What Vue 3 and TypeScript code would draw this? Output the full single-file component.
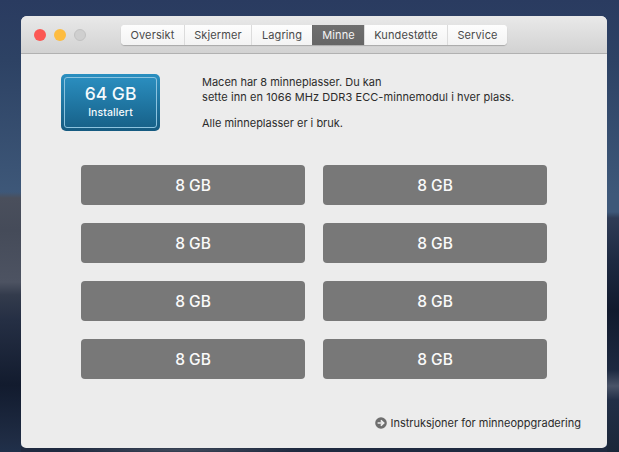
<script setup lang="ts">
const tabs = [
  { label: 'Oversikt', width: 63 },
  { label: 'Skjermer', width: 67 },
  { label: 'Lagring', width: 61 },
  { label: 'Minne', width: 52 },
  { label: 'Kundestøtte', width: 83 },
  { label: 'Service', width: 60 },
]
const activeTab = 'Minne'
const slots = Array.from({ length: 8 }, () => '8 GB')
</script>

<template>
  <div class="desktop">
    <section class="window">
      <header class="titlebar">
        <div class="lights">
          <span class="light red"></span>
          <span class="light yellow"></span>
          <span class="light gray"></span>
        </div>
        <nav class="tabs">
          <span
            v-for="tab in tabs"
            :key="tab.label"
            class="tab"
            :class="{ active: tab.label === activeTab }"
            :style="{ width: tab.width + 'px' }"
          >{{ tab.label }}</span>
        </nav>
      </header>
      <main class="content">
        <div class="summary">
          <div class="badge">
            <div class="badge-inner">
              <strong>64 GB</strong>
              <span>Installert</span>
            </div>
          </div>
          <div class="info">
            <p>Macen har 8 minneplasser. Du kan<br /><span class="wide">sette inn en 1066 MHz DDR3 ECC-minnemodul i hver plass.</span></p>
            <p>Alle minneplasser er i bruk.</p>
          </div>
        </div>
        <div class="slots">
          <div v-for="(slot, i) in slots" :key="i" class="slot">{{ slot }}</div>
        </div>
        <div class="footer">
          <svg class="arrow" width="12" height="12" viewBox="0 0 12 12">
            <circle cx="6" cy="6" r="5.8" fill="#6e6e6e" />
            <path d="M2.6 6H8M5.8 3.4 8.6 6 5.8 8.6" fill="none" stroke="#eee" stroke-width="1.7" />
          </svg>
          <span>Instruksjoner for minneoppgradering</span>
        </div>
      </main>
    </section>
  </div>
</template>

<style>
html, body { margin: 0; padding: 0; }
</style>

<style scoped>
.desktop {
  width: 619px;
  height: 452px;
  box-sizing: border-box;
  padding: 16px 12px 4px 21px;
  overflow: hidden;
  background:
    linear-gradient(180deg, rgba(74, 79, 92, 0) 192px, #4a4f5c 198px, #454b59 230px, #4d5362 282px, #333b4c 295px, #252f44 320px, #121b2e 385px, #1f2c44 440px, #20304a 452px) 0 0 / 21px 452px no-repeat,
    linear-gradient(180deg, rgba(47, 60, 86, 0) 212px, #2f3c56 218px, #1e2a42 260px, #111a2d 310px, #1d2940 370px, #4a5468 386px, #222f47 400px, #1b2739 452px) 100% 0 / 12px 452px no-repeat,
    radial-gradient(ellipse 120px 4px at 180px 450px, #414b5c 0%, rgba(65, 75, 92, 0) 100%) 0 0 / 619px 452px no-repeat,
    linear-gradient(180deg, #1f2a40, #1f2a40) 0 446px / 619px 6px no-repeat,
    linear-gradient(180deg, #2a3b60 0, #2d4264 60px, #3e5879 195px, #3e5879 452px);
  font-family: Inter, "Liberation Sans", sans-serif;
}
.window {
  width: 586px;
  height: 432px;
  display: flex;
  flex-direction: column;
  border-radius: 6px 6px 5px 5px;
  overflow: hidden;
  background: #ececec;
}
.titlebar {
  height: 37px;
  flex: none;
  display: flex;
  align-items: flex-start;
  background: linear-gradient(180deg, #e9e9e9 0%, #d2d2d2 100%);
  border-bottom: 1px solid #b1b1b1;
}
.lights {
  display: flex;
  gap: 8px;
  padding: 13px 0 0 13px;
  width: 87px;
  box-sizing: border-box;
}
.light {
  width: 12px;
  height: 12px;
  border-radius: 50%;
}
.red { background: #fc5753; }
.yellow { background: #fdbc40; }
.gray { background: #cfcfcf; border: 1px solid #c2c2c2; box-sizing: border-box; }
.tabs {
  display: flex;
  margin: 9px 0 0 13px;
  height: 20px;
  border-radius: 4px;
  background: #fff;
  box-shadow: 0 1px 1px rgba(0, 0, 0, 0.22);
  overflow: hidden;
}
.tab {
  display: flex;
  align-items: center;
  justify-content: center;
  box-sizing: border-box;
  font-size: 11px;
  letter-spacing: 0.12px;
  color: #4a4a4a;
  background: linear-gradient(180deg, #fdfdfd, #f3f3f3);
  border-left: 1px solid #dcdcdc;
}
.tab:first-child { border-left: 0; }
.tab.active {
  color: #f4f4f4;
  background: linear-gradient(180deg, #6f6f6f, #666);
  border-left-color: #696969;
}
.content {
  flex: 1;
  display: flex;
  flex-direction: column;
  padding: 20px 0 0 40px;
}
.summary {
  display: flex;
  gap: 42px;
  height: 91px;
}
.badge {
  width: 99px;
  height: 57px;
  box-sizing: border-box;
  padding: 3px;
  border-radius: 5px;
  background: linear-gradient(180deg, #2a8fc0, #155a80);
}
.badge-inner {
  height: 100%;
  box-sizing: border-box;
  border: 1px solid #8cc3df;
  border-radius: 3px;
  display: flex;
  flex-direction: column;
  align-items: center;
  color: #f4fafd;
  background: linear-gradient(180deg, #2a8dbe, #17628a);
  padding-top: 5px;
}
.badge-inner strong {
  font-size: 17.5px;
  line-height: 22px;
  font-weight: 500;
}
.badge-inner span {
  font-size: 10.5px;
  line-height: 15px;
  font-weight: 500;
  letter-spacing: 0.1px;
}
.info {
  font-size: 11px;
  line-height: 15px;
  color: #2b2b2b;
  padding-top: 1px;
}
.info p { margin: 0 0 11px; }
.wide { letter-spacing: 0.07px; }
.slots {
  display: grid;
  grid-template-columns: 224px 224px;
  grid-auto-rows: 40px;
  gap: 18px;
  margin-left: 20px;
}
.slot {
  display: flex;
  align-items: center;
  justify-content: center;
  border-radius: 4px;
  background: #787878;
  color: #fafafa;
  font-size: 15.5px;
  font-weight: 500;
}
.footer {
  display: flex;
  align-items: center;
  justify-content: flex-end;
  gap: 3px;
  margin: 37px 26px 0 0;
  height: 14px;
  font-size: 11px;
  color: #2b2b2b;
}
.arrow { flex: none; }
</style>
